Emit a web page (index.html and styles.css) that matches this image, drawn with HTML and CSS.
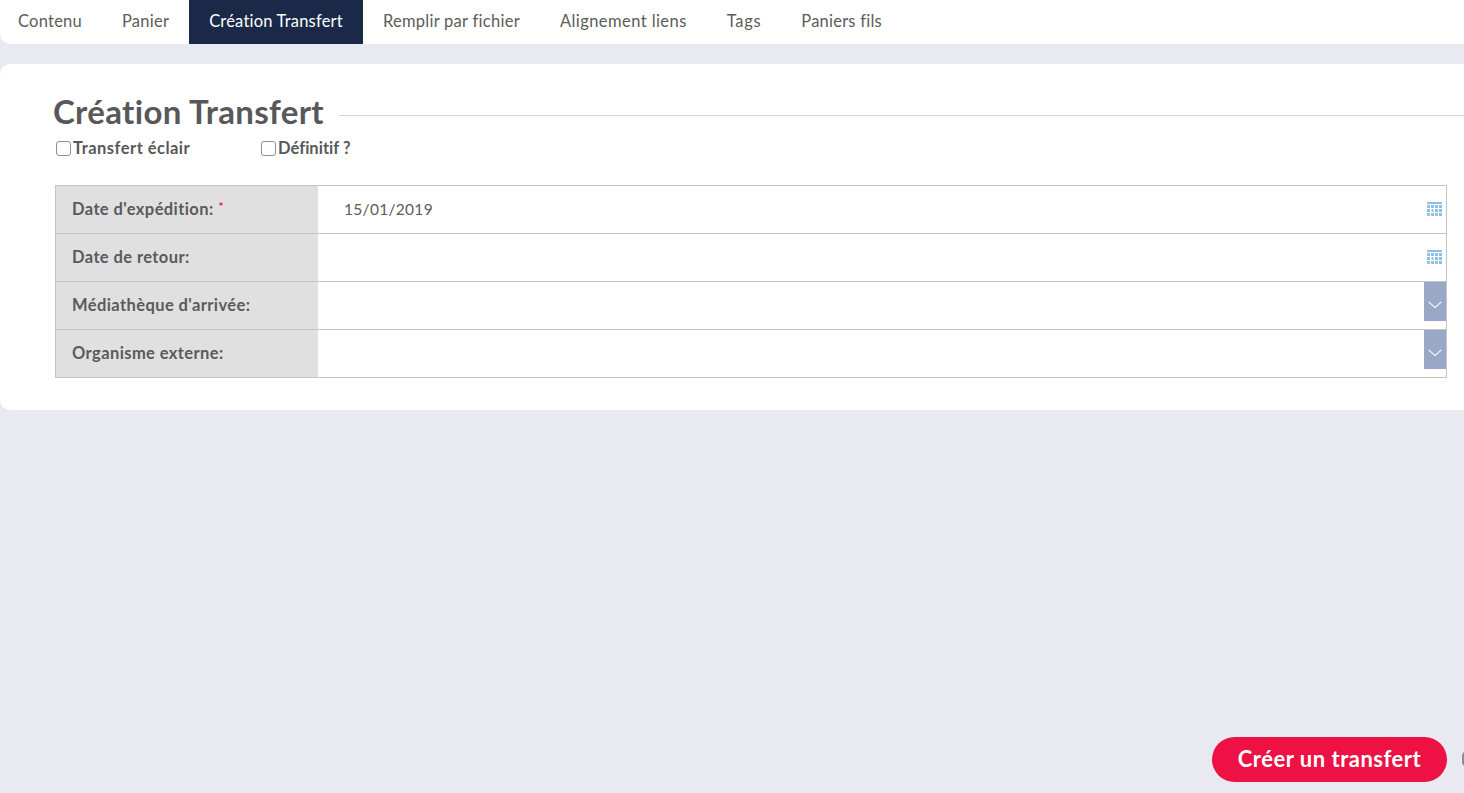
FILE: index.html
```html
<!DOCTYPE html>
<html lang="fr">
<head>
<meta charset="utf-8">
<title>Création Transfert</title>
<link rel="stylesheet" href="styles.css">
</head>
<body>
<div class="page">
  <nav class="tabs">
    <a class="tab">Contenu</a>
    <a class="tab">Panier</a>
    <a class="tab active">Création Transfert</a>
    <a class="tab tab-file">Remplir par fichier</a>
    <a class="tab tab-wide">Alignement liens</a>
    <a class="tab tab-wider">Tags</a>
    <a class="tab">Paniers fils</a>
  </nav>
  <main class="panel">
    <div class="heading">
      <h1 class="title">Création Transfert</h1>
      <span class="rule"></span>
    </div>
    <div class="checks">
      <label class="check check-first"><span class="box"></span>Transfert éclair</label>
      <label class="check check-second"><span class="box"></span>Définitif ?</label>
    </div>
    <div class="form">
      <div class="row">
        <div class="label">Date d'expédition: <sup class="req">*</sup></div>
        <div class="value"><span class="date">15/01/2019</span>
          <svg class="cal" width="15" height="14" viewBox="0 0 15 14"><use href="#cal"/></svg>
        </div>
      </div>
      <div class="row">
        <div class="label">Date de retour:</div>
        <div class="value">
          <svg class="cal" width="15" height="14" viewBox="0 0 15 14"><use href="#cal"/></svg>
        </div>
      </div>
      <div class="row">
        <div class="label">Médiathèque d'arrivée:</div>
        <div class="value select">
          <span class="arrow"><svg width="14" height="8" viewBox="0 0 14 8"><path d="M.7.8 7 6.6 13.3.8" fill="none" stroke="#fff" stroke-width="1.1"/></svg></span>
        </div>
      </div>
      <div class="row">
        <div class="label">Organisme externe:</div>
        <div class="value select">
          <span class="arrow"><svg width="14" height="8" viewBox="0 0 14 8"><path d="M.7.8 7 6.6 13.3.8" fill="none" stroke="#fff" stroke-width="1.1"/></svg></span>
        </div>
      </div>
    </div>
  </main>
  <footer class="actions">
    <button class="create" type="button">Créer un transfert</button>
    <span class="edge"></span>
  </footer>
</div>
<svg class="defs" width="0" height="0">
  <symbol id="cal" viewBox="0 0 15 14">
    <g fill="#8fc1e6">
      <rect x="0" y="0" width="15" height="2"/>
      <rect x="0" y="3" width="3" height="3"/><rect x="4" y="3" width="3" height="3"/><rect x="8" y="3" width="3" height="3"/><rect x="12" y="3" width="3" height="3"/>
      <rect x="0" y="7" width="3" height="3"/><rect x="4" y="8" width="3" height="1"/><rect x="5" y="7" width="1" height="3"/><rect x="8" y="7" width="3" height="3"/><rect x="12" y="7" width="3" height="3"/>
      <rect x="0" y="11" width="3" height="3"/><rect x="4" y="11" width="3" height="3"/><rect x="8" y="11" width="3" height="3"/><rect x="12" y="11" width="3" height="3"/>
    </g>
  </symbol>
</svg>
</body>
</html>
```
FILE: styles.css
```css
* { box-sizing: border-box; }
html, body { margin: 0; height: 100%; overflow: hidden; }
body {
  background: #e9e9f2;
  color: #58585a;
  font-family: Lato, "Open Sans", sans-serif;
}
.page { display: flex; flex-direction: column; height: 793px; overflow: hidden; }
.tabs {
  display: flex;
  height: 44px;
  background: #fff;
  border-radius: 0 0 0 10px;
}
.tab {
  display: flex;
  align-items: center;
  padding: 0 20px 3px;
  font-size: 16.5px;
  letter-spacing: .24px;
  color: #5c5c58;
}
.tab:first-child { padding-left: 18px; }
.tab.active { background: #1a2948; color: #fff; letter-spacing: .2px; }
.tab-file { letter-spacing: .27px; }
.tab-wide { letter-spacing: .43px; }
.tab-wider { letter-spacing: .68px; }
.panel {
  margin-top: 20px;
  height: 346px;
  background: #fff;
  border-radius: 10px 0 0 10px;
  padding: 28px 17px 0 55px;
}
.heading { display: flex; align-items: center; margin-left: -2px; margin-right: -17px; height: 40px; }
.title { margin: 0 0 3px; font-size: 33px; font-weight: 700; letter-spacing: .33px; white-space: nowrap; color: #58585a; }
.rule { flex: 1; height: 1px; margin: 6px 0 0 15px; background: #d4d4d4; }
.checks { display: flex; margin-top: 6px; height: 20px; padding-left: 1px; }
.check { display: flex; align-items: center; font-size: 16.5px; font-weight: 700; letter-spacing: .47px; color: #58585a; }
.check-first { width: 205px; }
.check-second { letter-spacing: .03px; }
.box {
  width: 15px; height: 15px; margin-right: 2px;
  border: 1px solid #8f8f9d; border-radius: 3px; background: #fff;
}
.form { margin-top: 27px; border: 1px solid #c4c4c4; border-top-width: 1px; }
.row { display: flex; height: 48px; border-bottom: 1px solid #c4c4c4; }
.row:last-child { border-bottom: 0; height: 47px; }
.label {
  width: 262px;
  display: flex; align-items: center; gap: 5px;
  padding: 0 0 2px 16px;
  background: #e0e0e0;
  font-size: 16.5px; font-weight: 700; letter-spacing: .4px;
  color: #5a5a5c;
}
.req { color: #ee1144; font-size: 12px; line-height: 1; margin-top: -3px; }
.value { flex: 1; display: flex; align-items: center; padding: 0 4px 0 26px; }
.cal { margin: 0 0 2px auto; }
.date { font-size: 15.5px; letter-spacing: .3px; color: #5c5c58; padding-bottom: 2px; }
.select { align-items: flex-start; padding-right: 0; justify-content: flex-end; }
.arrow {
  width: 22px; height: 39px;
  display: flex; align-items: center; justify-content: center;
  padding-top: 6px;
  background: #9aa8c7;
}
.actions { flex: 1; display: flex; justify-content: flex-end; align-items: flex-end; padding-bottom: 11px; position: relative; }
.create {
  width: 235px; height: 45px; margin-right: 17px;
  border: 0; border-radius: 23px;
  background: #ee1144; color: #fff;
  font-family: inherit; font-size: 22px; font-weight: 700; letter-spacing: .5px;
  padding: 0 0 2px;
}
.edge { position: absolute; right: -8px; bottom: 26px; width: 10px; height: 16px; border-radius: 5px; background: #8a8a9e; }
.defs { position: absolute; }
```
